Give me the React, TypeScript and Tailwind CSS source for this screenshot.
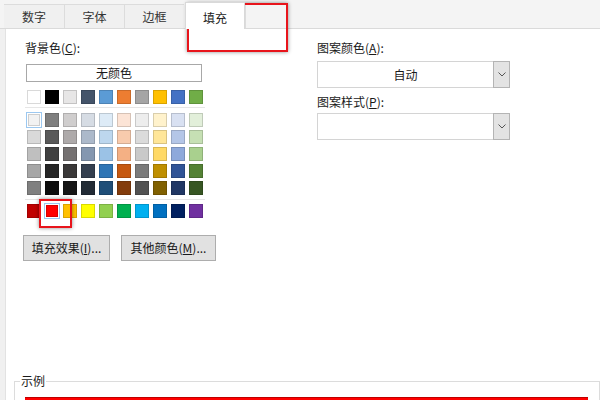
const font = "font-['Segoe_UI','Noto_Sans_CJK_SC',sans-serif]";

const headerRow = ["#FFFFFF", "#000000", "#E7E6E6", "#44546A", "#5B9BD5", "#ED7D31", "#A5A5A5", "#FFC000", "#4472C4", "#70AD47"];

const tintRows = [
  ["#F2F2F2", "#7F7F7F", "#D0CECE", "#D6DCE4", "#DDEBF7", "#FCE4D6", "#EDEDED", "#FFF2CC", "#D9E1F2", "#E2EFDA"],
  ["#D9D9D9", "#595959", "#AEAAAA", "#ACB9CA", "#BDD7EE", "#F8CBAD", "#DBDBDB", "#FFE699", "#B4C6E7", "#C6E0B4"],
  ["#BFBFBF", "#404040", "#757171", "#8497B0", "#9BC2E6", "#F4B084", "#C9C9C9", "#FFD966", "#8EA9DB", "#A9D08E"],
  ["#A6A6A6", "#262626", "#3A3838", "#333F4F", "#2F75B5", "#C65911", "#7B7B7B", "#BF8F00", "#305496", "#548235"],
  ["#808080", "#0D0D0D", "#161616", "#222B35", "#1F4E78", "#833C0C", "#525252", "#806000", "#203764", "#375623"],
];

const standardRow = ["#C00000", "#FF0000", "#FFC000", "#FFFF00", "#92D050", "#00B050", "#00B0F0", "#0070C0", "#002060", "#7030A0"];

function Swatch({ color, selected }: { color: string; selected?: boolean }) {
  return (
    <div
      className={
        selected
          ? "w-[16px] h-[16px] -m-px border border-[#9cc8f0] p-px"
          : "w-[14px] h-[14px]"
      }
    >
      <div className="w-full h-full border border-[#00000026]" style={{ backgroundColor: color }} />
    </div>
  );
}

function SwatchRow({ colors, selectedIndex }: { colors: string[]; selectedIndex?: number }) {
  return (
    <div className="flex gap-[4px] ml-[2px]">
      {colors.map((c, i) => (
        <Swatch key={i} color={c} selected={i === selectedIndex} />
      ))}
    </div>
  );
}

function Label({ text, hotkey }: { text: string; hotkey: string }) {
  return (
    <div className="h-[16px] leading-[16px] text-[12px] text-[#1a1a1a]">
      {text}(<span className="underline">{hotkey}</span>):
    </div>
  );
}

function Select({ value }: { value?: string }) {
  return (
    <div className="flex h-[27px] w-[193px] border border-[#d4d4d4] bg-white">
      <div className="flex-1 flex items-center justify-center text-[12px] text-[#1a1a1a]">{value}</div>
      <div className="w-[17px] my-[-1px] mr-[-1px] border border-[#b4b4b4] bg-[#e3e3e3] flex items-center justify-center">
        <svg width="8" height="5" viewBox="0 0 8 5">
          <path d="M0.5 0.5 L4 4 L7.5 0.5" fill="none" stroke="#555" strokeWidth="1" />
        </svg>
      </div>
    </div>
  );
}

function Tab({ text, active }: { text: string; active?: boolean }) {
  if (active) {
    return (
      <div className="w-[60px] h-[27px] ml-px bg-white border border-b-0 border-[#d9d9d9] flex items-start justify-center pt-[6px] text-[12px] text-[#1a1a1a] relative z-10 -mb-px">
        {text}
      </div>
    );
  }
  return (
    <div className="w-[60px] h-[24px] bg-[#f0f0f0] border border-b-0 border-r-0 border-[#dcdcdc] first:border-l-0 flex items-center justify-center text-[12px] text-[#333]">
      {text}
    </div>
  );
}

export default function App() {
  return (
    <div className={`w-[600px] h-[400px] bg-[#f0f0f0] overflow-hidden relative ${font}`}>
      {/* tab strip */}
      <div className="h-[29px] flex items-end pl-[4px] bg-[#f4f4f4] border-b border-[#dadada]">
        <Tab text="数字" />
        <Tab text="字体" />
        <Tab text="边框" />
        <Tab text="填充" active />
        <div className="w-px h-[24px] bg-[#dcdcdc]" />
      </div>

      {/* panel */}
      <div className="ml-[5px] h-[371px] bg-white border-l border-[#e2e2e2] flex flex-col">
        <div className="flex pl-[19px] pt-[11px]">
          {/* left column */}
          <div className="w-[292px] flex flex-col">
            <Label text="背景色" hotkey="C" />
            <div className="mt-[8px] ml-px w-[176px] h-[18px] border border-[#a8a8a8] flex items-center justify-center text-[12px] text-[#1a1a1a]">
              无颜色
            </div>
            <div className="mt-[8px]">
              <SwatchRow colors={headerRow} />
            </div>
            <div className="mt-[3px] w-[180px] h-px bg-[#e6e6e6]" />
            <div className="mt-[5px] flex flex-col gap-[3px]">
              {tintRows.map((row, i) => (
                <SwatchRow key={i} colors={row} selectedIndex={i === 0 ? 0 : undefined} />
              ))}
            </div>
            <div className="mt-[4px] w-[180px] h-px bg-[#e6e6e6]" />
            <div className="mt-[4px]">
              <SwatchRow colors={standardRow} selectedIndex={1} />
            </div>
            <div className="mt-[17px] -ml-[2px] flex gap-[11px]">
              <button className="w-[87px] h-[26px] bg-[#e1e1e1] border border-[#adadad] text-[12px] text-[#1a1a1a]">
                填充效果(<span className="underline">I</span>)...
              </button>
              <button className="w-[95px] h-[26px] bg-[#e1e1e1] border border-[#adadad] text-[12px] text-[#1a1a1a]">
                其他颜色(<span className="underline">M</span>)...
              </button>
            </div>
          </div>

          {/* right column */}
          <div className="w-[193px] flex flex-col">
            <Label text="图案颜色" hotkey="A" />
            <div className="mt-[5px]">
              <Select value="自动" />
            </div>
            <div className="mt-[6px]">
              <Label text="图案样式" hotkey="P" />
            </div>
            <div className="mt-[3px]">
              <Select />
            </div>
          </div>
        </div>

        {/* sample group */}
        <div className="mt-auto ml-[8px] h-[19px] border border-b-0 border-[#dcdcdc] relative">
          <div className="absolute -top-[9px] left-[5px] bg-white px-px text-[12px] leading-[16px] text-[#1a1a1a]">
            示例
          </div>
          <div className="mt-[15px] ml-[10px] mr-[11px] h-[10px] bg-[#ff0000] border-t border-[#c00000]" />
        </div>
      </div>

      {/* red annotation boxes */}
      <div className="absolute left-[187px] top-[3px] w-[101px] h-[49px] border-2 border-[#e8141b] shadow-[0_0_4px_rgba(0,0,0,0.45)]" />
      <div className="absolute left-[39px] top-[199px] w-[33px] h-[29px] border-2 border-[#e8141b] shadow-[0_0_4px_rgba(0,0,0,0.45)]" />
    </div>
  );
}
